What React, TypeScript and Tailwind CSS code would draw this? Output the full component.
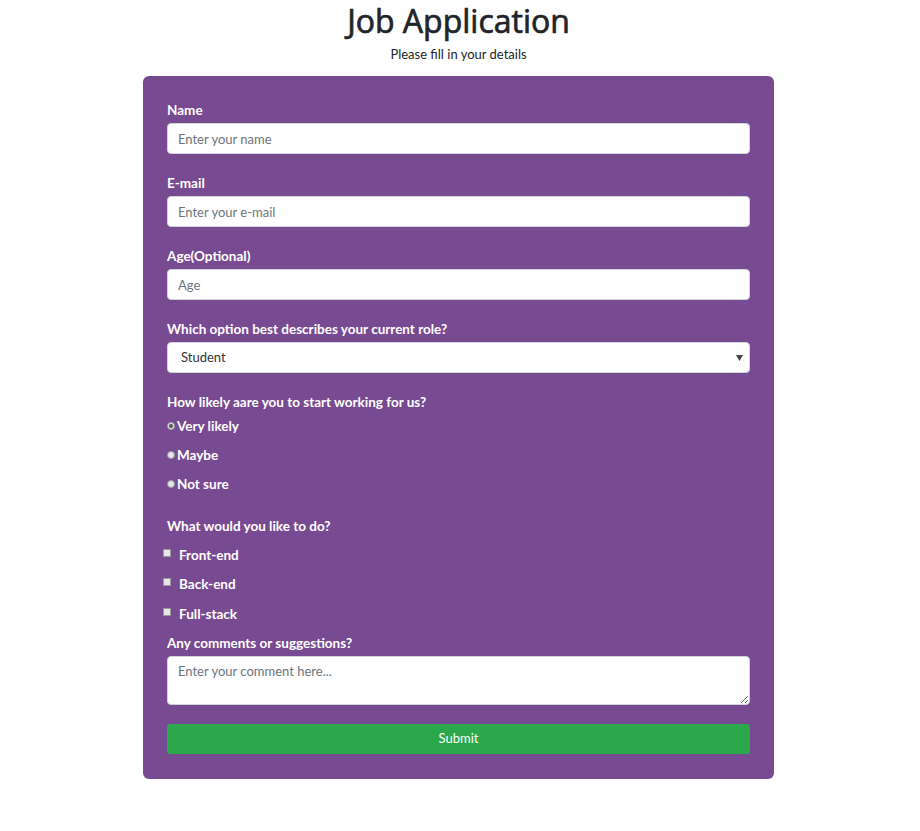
import React from "react";

const font = { fontFamily: '"Segoe UI", Lato, "Open Sans", "Liberation Sans", sans-serif' };
const titleFont = { fontFamily: '"Segoe UI", "Open Sans", "Liberation Sans", sans-serif' };

function Label({ children, className = "" }: { children: React.ReactNode; className?: string }) {
  return <div className={"h-5 text-[13.5px] leading-5 font-bold text-white " + className}>{children}</div>;
}

function TextInput({ placeholder }: { placeholder: string }) {
  return (
    <input
      placeholder={placeholder}
      className="mt-[3px] block h-[31px] w-full rounded-[4px] border border-[#ced4da] bg-white px-[10px] text-[13px] text-[#495057] placeholder:text-[#6c757d] outline-none"
    />
  );
}

export default function App() {
  return (
    <div className="min-h-screen bg-white pr-[3px]" style={font}>
      <div className="pt-[3px] text-center">
        <h1
          className="text-[32px] leading-[36px] font-normal text-[#212529] [-webkit-text-stroke:0.7px_#212529]"
          style={titleFont}
        >
          Job Application
        </h1>
        <p className="mt-[7px] text-[13px] leading-4 text-[#212529]">Please fill in your details</p>
      </div>
      <div className="mx-auto mt-[14px] w-[631px] rounded-[6px] bg-[#784a91] px-6 pt-6 pb-[25px]">
        <Label>Name</Label>
        <TextInput placeholder="Enter your name" />
        <Label className="mt-[19px]">E-mail</Label>
        <TextInput placeholder="Enter your e-mail" />
        <Label className="mt-[19px]">Age(Optional)</Label>
        <TextInput placeholder="Age" />
        <Label className="mt-[19px]">Which option best describes your current role?</Label>
        <div className="relative mt-[3px] flex h-[31px] w-full items-center rounded-[4px] border border-[#ced4da] bg-white pl-[13px] text-[13px] text-[#333]">
          Student
          <svg className="absolute right-[6px] top-[12px]" width="7" height="6" viewBox="0 0 7 6">
            <path d="M0 0 H7 L3.5 6 Z" fill="#444" />
          </svg>
        </div>
        <Label className="mt-[19px]">How likely aare you to start working for us?</Label>
        <div className="flex flex-col">
          {["Very likely", "Maybe", "Not sure"].map((t, i) => (
            <div key={t} className="flex h-[29px] items-center text-[13.5px] font-bold text-white">
              <span className="mb-[2px] flex h-[8px] w-[8px] items-center justify-center rounded-full border border-[#9a9a9a] bg-[#e6e6e6]">
                {i === 0 && <span className="h-[4px] w-[4px] rounded-full bg-[#555]" />}
              </span>
              <span className="ml-[2px]">{t}</span>
            </div>
          ))}
        </div>
        <Label className="mt-[17px]">What would you like to do?</Label>
        <div className="mt-[4px] flex flex-col">
          {["Front-end", "Back-end", "Full-stack"].map((t) => (
            <div key={t} className="flex h-[29.5px] items-center text-[13.5px] font-bold text-white">
              <span className="-ml-[4px] mb-[4px] h-[8px] w-[8px] border border-[#9a9a9a] bg-[#e6e6e6]" />
              <span className="ml-[8px]">{t}</span>
            </div>
          ))}
        </div>
        <Label className="mt-[4px]">Any comments or suggestions?</Label>
        <textarea
          placeholder="Enter your comment here..."
          className="mt-[3px] block h-[49px] w-full rounded-[4px] border border-[#ced4da] bg-white px-[10px] py-[5px] text-[13px] text-[#495057] placeholder:text-[#6c757d] outline-none"
        />
        <button className="mt-[19px] block h-[30px] w-full rounded-[3px] bg-[#2ba84c] text-[13px] text-white">
          Submit
        </button>
      </div>
    </div>
  );
}
